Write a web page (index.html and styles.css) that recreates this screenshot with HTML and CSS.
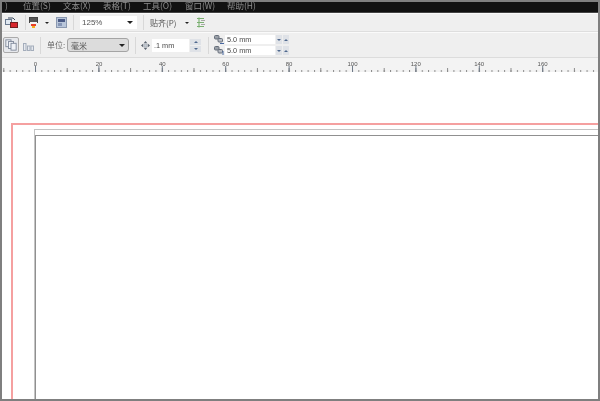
FILE: index.html
```html
<!DOCTYPE html>
<html lang="zh">
<head>
<meta charset="utf-8">
<title>CorelDRAW</title>
<link rel="stylesheet" href="styles.css">
</head>
<body>
<div class="frame">
  <div class="chrome">
  <div class="menubar">
    <span class="menu m0">)</span><span class="menu m1">位置(S)</span><span class="menu m2">文本(X)</span><span class="menu m3">表格(T)</span><span class="menu m4">工具(O)</span><span class="menu m5">窗口(W)</span><span class="menu m6">帮助(H)</span>
  </div>
  <div class="toolbar t1">
    <svg class="ic ic-first" width="13" height="11" viewBox="0 0 13 11"><rect x=".5" y="2.500" width="6" height="5" fill="#dfe7f0" stroke="#6a7a90"/><rect x="5.500" y="5.500" width="7" height="5" fill="#d8262c" stroke="#702020"/><path d="M3 1h5l2 2" fill="none" stroke="#3a4a60"/></svg>
    <span class="sep s1"></span>
    <svg class="ic ic-fill" width="9" height="11" viewBox="0 0 9 11"><rect x=".5" y=".5" width="8" height="5" fill="#555" stroke="#444"/><rect x="1" y="5" width="7" height="2" fill="#f4f4f4"/><rect x="2" y="7" width="5" height="2" fill="#e8402a"/><rect x="3" y="9" width="3" height="2" fill="#f4b020"/></svg>
    <span class="arrow small a1"></span>
    <svg class="ic" width="11" height="11" viewBox="0 0 11 11"><rect x=".5" y=".5" width="10" height="10" fill="#b9c6da" stroke="#8a98b0"/><rect x="2" y="2" width="7" height="3" fill="#4a5a85"/><rect x="2" y="6" width="4" height="3" fill="#8595b5"/></svg>
    <span class="sep s2"></span>
    <div class="combo zoomc"><span>125%</span><span class="arrow"></span></div>
    <span class="sep s3"></span>
    <span class="label snap">贴齐(P)</span>
    <span class="arrow small a2"></span>
    <svg class="ic" width="8" height="11" viewBox="0 0 8 11"><path d="M2 .5v10M0 1.500h7M0 5.500h7M0 9.500h7" fill="none" stroke="#7ab070" stroke-width="1.100"/><path d="M4 3.500h4M4 7.500h4" stroke="#a8a8a8"/></svg>
  </div>
  <div class="toolbar t2">
    <div class="toggle"><svg width="12" height="12" viewBox="0 0 14 14"><rect x="1" y="1" width="6" height="8" fill="#eef1f6" stroke="#7a8496"/><rect x="4" y="3" width="6" height="8" fill="#eef1f6" stroke="#7a8496"/><rect x="7" y="5" width="6" height="8" fill="#eef1f6" stroke="#7a8496"/></svg></div>
    <svg class="ic ic-pages" width="11" height="8" viewBox="0 0 11 8"><rect x=".5" y=".5" width="2.500" height="7" fill="#e6e9ef" stroke="#a4adbb"/><rect x="4.500" y="3" width="2.500" height="4.500" fill="#e6e9ef" stroke="#a4adbb"/><rect x="8" y="3" width="2.500" height="4.500" fill="#e6e9ef" stroke="#a4adbb"/></svg>
    <span class="sep s4"></span>
    <span class="label unit">单位:</span>
    <div class="combo unitc"><span>毫米</span><span class="arrow"></span></div>
    <span class="sep s5"></span>
    <svg class="ic ic-move" width="9" height="9" viewBox="0 0 11 11"><path d="M5.500 0l2 2.500h-4zM5.500 11l2-2.500h-4zM0 5.500l2.500-2v4zM11 5.500l-2.500-2v4z" fill="#5c6470"/><rect x="3.500" y="3.500" width="4" height="4" fill="#c4cad2" stroke="#7a828e" stroke-width=".6"/></svg>
    <div class="field nudge"><span>.1 mm</span></div>
    <div class="spin tall"><span class="cell"><span class="up"></span></span><span class="cell"><span class="down"></span></span></div>
    <span class="sep s6"></span>
    <div class="dup">
      <div class="dup-row">
        <svg class="ic" width="10" height="9" viewBox="0 0 10 9"><rect x=".5" y=".5" width="4.500" height="3.500" rx="1" fill="#9aa0a8" stroke="#666e7a"/><rect x="4" y="3.500" width="4.500" height="3.500" rx="1" fill="#b8bcc4" stroke="#666e7a"/><path d="M6 8.500h4" stroke="#4868a0"/></svg>
        <div class="field dupf"><span>5.0 mm</span></div>
        <div class="spin wide"><span class="cell"><span class="down"></span></span><span class="cell"><span class="up"></span></span></div>
      </div>
      <div class="dup-row">
        <svg class="ic" width="10" height="9" viewBox="0 0 10 9"><rect x=".5" y=".5" width="4.500" height="3.500" rx="1" fill="#9aa0a8" stroke="#666e7a"/><rect x="4" y="3.500" width="4.500" height="3.500" rx="1" fill="#b8bcc4" stroke="#666e7a"/><path d="M9 5v4" stroke="#4868a0"/></svg>
        <div class="field dupf"><span>5.0 mm</span></div>
        <div class="spin wide"><span class="cell"><span class="down"></span></span><span class="cell"><span class="up"></span></span></div>
      </div>
    </div>
  </div>
  <div class="ruler">
    <svg width="596" height="17" viewBox="0 0 596 17">
      <defs>
        <pattern id="minor" x="33" y="0" width="6.34" height="17" patternUnits="userSpaceOnUse"><rect x="0" y="12" width="1" height="2" fill="#8b8b8b"/></pattern>
        <pattern id="mid" x="33" y="0" width="31.7" height="17" patternUnits="userSpaceOnUse"><rect x="0" y="10" width="1" height="4" fill="#8b8b8b"/></pattern>
        <pattern id="major" x="33" y="0" width="63.4" height="17" patternUnits="userSpaceOnUse"><rect x="0" y="8" width="1" height="6" fill="#6f7a88"/></pattern>
      </defs>
      <rect width="596" height="17" fill="url(#minor)"/>
      <rect width="596" height="17" fill="url(#mid)"/>
      <rect width="596" height="17" fill="url(#major)"/>
      <g class="rt">
        <text x="33.500" y="8">0</text><text x="97" y="8">20</text><text x="160.300" y="8">40</text><text x="223.700" y="8">60</text><text x="287" y="8">80</text><text x="350.500" y="8">100</text><text x="413.800" y="8">120</text><text x="477.200" y="8">140</text><text x="540.600" y="8">160</text>
      </g>
    </svg>
  </div>
  </div>
  <div class="canvas">
    <div class="bleed"></div>
    <div class="page-outer"></div>
    <div class="page-inner"></div>
  </div>
</div>
</body>
</html>
```
FILE: styles.css
```css
* { box-sizing: border-box; }
html, body { margin: 0; padding: 0; width: 600px; height: 401px; overflow: hidden; background: #7f7f7f; }
.frame {
  width: 600px; height: 401px;
  border: 2px solid #7f7f7f;
  display: flex; flex-direction: column;
  background: #fff;
  font-family: "Noto Sans CJK SC", "Liberation Sans", sans-serif;
  overflow: hidden;
}
.chrome { flex: none; filter: blur(0.5px); }
.menubar { height: 11px; background: #111; position: relative; overflow: hidden; border-bottom: 1px solid #444; }
.menu { position: absolute; bottom: 1px; font-size: 8.500px; line-height: 11px; color: #8c8c8c; white-space: nowrap; }
.m0 { left: 3px; }
.m1 { left: 21px; } .m2 { left: 61px; } .m3 { left: 101px; } .m4 { left: 141px; } .m5 { left: 183px; } .m6 { left: 225px; }

.toolbar { display: flex; align-items: center; background: #efefef; border-top: 1px solid #fafafa; }
.t1 { height: 19px; border-bottom: 1px solid #dedede; padding-left: 3px; }
.t2 { height: 26px; padding-left: 1px; border-bottom: 1px solid #dcdcdc; }
.ic { flex: none; display: block; }
.sep { flex: none; width: 1px; height: 15px; background: #d8d8d8; }
.arrow { flex: none; width: 0; height: 0; border: solid transparent; border-width: 3px 3px 0 3px; border-top-color: #222; }
.arrow.small { border-width: 2px 2px 0 2px; }
.s1 { margin: 0 3px 0 7px; }
.a1 { margin: 0 7px 0 7px; }
.s2 { margin: 0 6px; }
.combo { flex: none; display: flex; align-items: center; justify-content: space-between; font-size: 8px; color: #555; }
.zoomc { width: 57px; height: 13px; background: #fff; padding: 0 4px 0 2px; font-family: "Liberation Sans", sans-serif; }
.s3 { margin: 0 6px; }
.label { flex: none; font-size: 8px; color: #555; line-height: 12px; white-space: nowrap; }
.snap { width: 26px; }
.a2 { margin: 0 8px 0 9px; }
.toggle { flex: none; width: 16px; height: 16px; border: 1px solid #aaa; border-radius: 2px; background: #e6e8ec; display: flex; align-items: center; justify-content: center; }
.ic-pages { margin: 3px 0 0 4px; }
.s4 { margin: 0 6px; height: 17px; }
.unit { width: 17px; color: #666; margin-right: 3px; }
.unitc { width: 62px; height: 14px; background: #dcdcdc; border: 1px solid #a4a4a4; border-radius: 3px; padding: 0 3px; }
.s5 { margin: 0 5px 0 6px; height: 17px; }
.ic-move { margin-right: 2px; }
.field { flex: none; display: flex; align-items: center; background: #fff; font-family: "Liberation Sans", sans-serif; font-size: 7.300px; color: #4a4a4a; padding-left: 2px; }
.nudge { width: 37px; height: 13px; }
.spin { flex: none; display: flex; gap: 1px; }
.cell { flex: 1; display: flex; align-items: center; justify-content: center; background: #dfe2e7; }
.tall { flex-direction: column; width: 11px; height: 13px; margin-left: 1px; }
.wide { width: 13px; height: 9px; margin-left: 1px; }
.up { width: 0; height: 0; border: solid transparent; border-width: 0 2px 2px 2px; border-bottom-color: #50698e; }
.down { width: 0; height: 0; border: solid transparent; border-width: 2px 2px 0 2px; border-top-color: #50698e; }
.s6 { margin: 0 5px 0 7px; height: 17px; }
.dup { flex: none; display: flex; flex-direction: column; gap: 2px; }
.dup-row { display: flex; align-items: center; height: 9px; }
.dupf { width: 50px; height: 9px; margin-left: 1px; }

.ruler { height: 17px; background: linear-gradient(#f3f3f3 14px, #fff 14px); }
.ruler svg { display: block; }
.rt text { font-family: "Liberation Sans", sans-serif; font-size: 6px; fill: #555; text-anchor: middle; }

.canvas { flex: 1; position: relative; background: #fff; overflow: hidden; }
.bleed { position: absolute; left: 9px; top: 48px; width: 700px; height: 400px; border: 2px solid #f5a0a0; }
.page-outer { position: absolute; left: 32px; top: 54px; width: 700px; height: 400px; border: 1px solid #c4c4c4; }
.page-inner { position: absolute; left: 33px; top: 60px; width: 700px; height: 400px; border: 1px solid #909090; }
```
